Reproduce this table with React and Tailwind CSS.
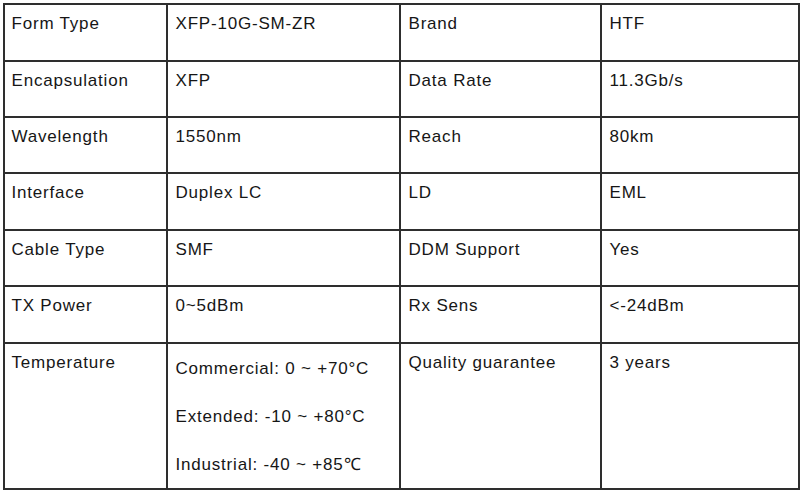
import React from "react";

const rows = [
	{ h: "h-[57px]", a: "Form Type", b: "XFP-10G-SM-ZR", c: "Brand", d: "HTF" },
	{ h: "h-[56px]", a: "Encapsulation", b: "XFP", c: "Data Rate", d: "11.3Gb/s" },
	{ h: "h-[56px]", a: "Wavelength", b: "1550nm", c: "Reach", d: "80km" },
	{ h: "h-[57px]", a: "Interface", b: "Duplex LC", c: "LD", d: "EML" },
	{ h: "h-[56px]", a: "Cable Type", b: "SMF", c: "DDM Support", d: "Yes" },
	{ h: "h-[57px]", a: "TX Power", b: "0~5dBm", c: "Rx Sens", d: "<-24dBm" },
];

const temps = ["Commercial: 0 ~ +70°C", "Extended: -10 ~ +80°C", "Industrial: -40 ~ +85℃"];

const cell = "border-2 border-[#2e2e2e] align-top pt-[9px] pl-2 pr-2 leading-[20px]";

const App = () => {
	return (
		<div className="w-[800px] h-[497px] bg-white pt-[2.5px] pl-[2.5px] overflow-hidden">
			<table
				className="table-fixed border-collapse w-[795px] text-[17px] tracking-[0.8px] text-[#161616]"
				style={{ fontFamily: '"Liberation Sans", Arial, sans-serif' }}
			>
				<colgroup>
					<col className="w-[163px]" />
					<col className="w-[233px]" />
					<col className="w-[201px]" />
					<col className="w-[198px]" />
				</colgroup>
				<tbody>
					{rows.map((r) => (
						<tr key={r.a} className={r.h}>
							<td className={cell + " pl-[7px]"}>{r.a}</td>
							<td className={cell}>{r.b}</td>
							<td className={cell}>{r.c}</td>
							<td className={cell}>{r.d}</td>
						</tr>
					))}
					<tr className="h-[146px]">
						<td className={cell + " pl-[7px]"}>Temperature</td>
						<td className={cell}>
							<div className="flex flex-col gap-[28px] pt-[6px]">
								{temps.map((t) => (
									<span key={t}>{t}</span>
								))}
							</div>
						</td>
						<td className={cell}>Quality guarantee</td>
						<td className={cell}>3 years</td>
					</tr>
				</tbody>
			</table>
		</div>
	);
};

export default App;
